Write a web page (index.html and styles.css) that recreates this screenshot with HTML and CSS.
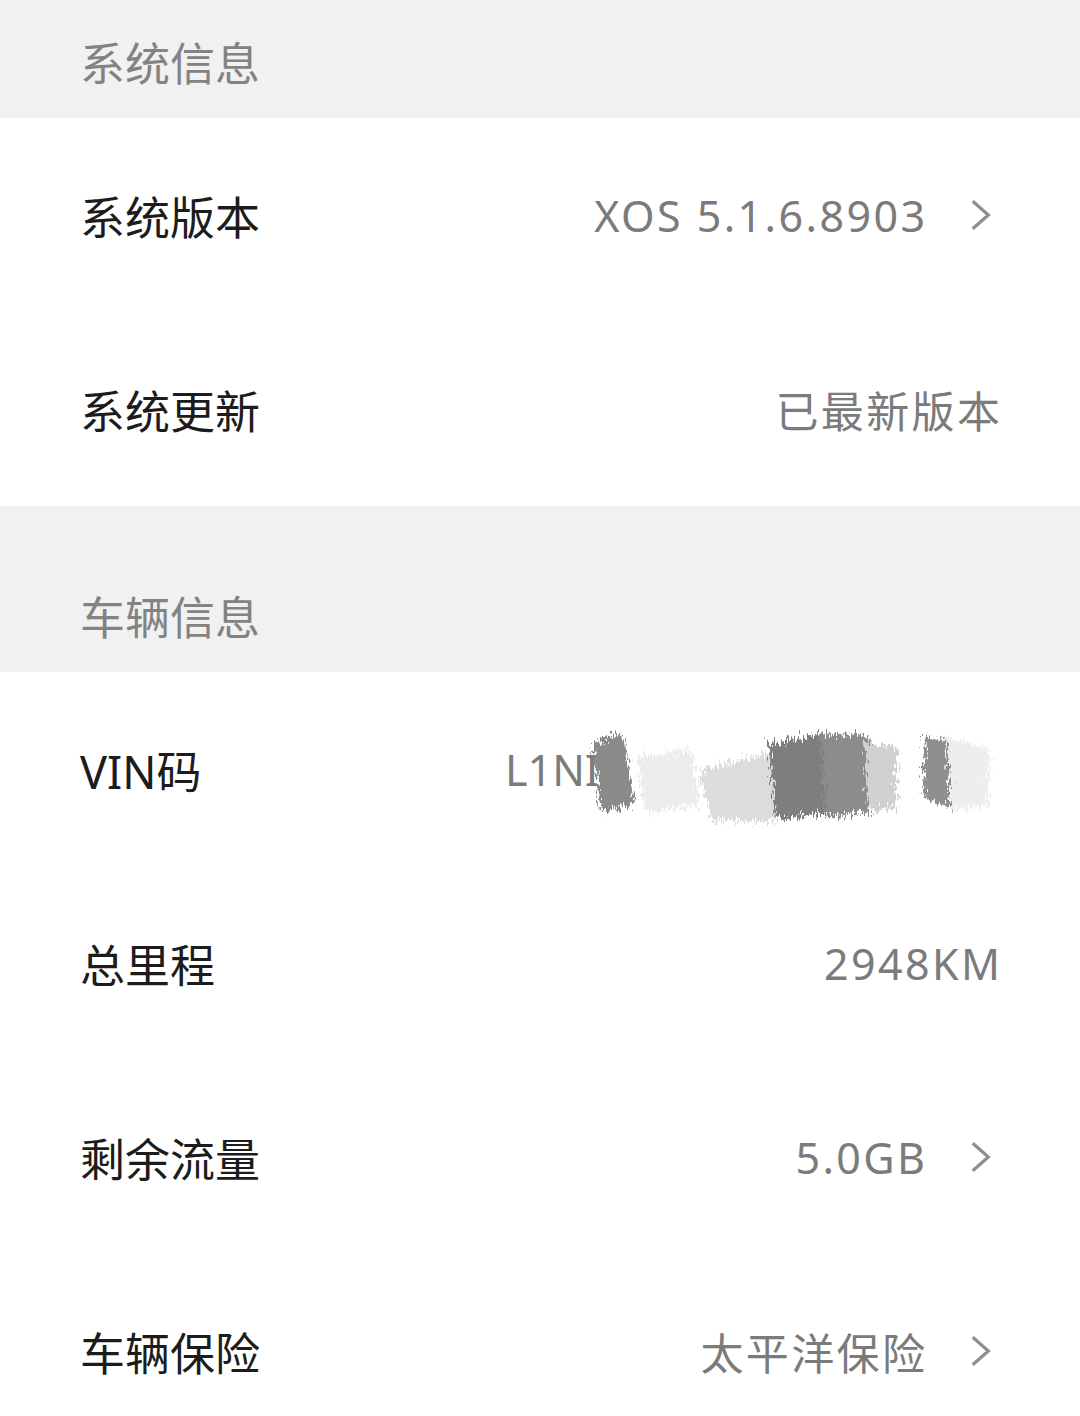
FILE: index.html
```html
<!DOCTYPE html>
<html>
<head>
    <meta charset="utf-8">
    <link rel="stylesheet" href="styles.css">
</head>
<body>
<div class="page">
    <div class="group-title first">系统信息</div>
    <div class="row">
        <span class="label">系统版本</span>
        <span class="value">XOS 5.1.6.8903</span>
        <svg class="arrow" viewBox="0 0 24 34"><path d="M3 2 L20 17 L3 32" /></svg>
    </div>
    <div class="row">
        <span class="label">系统更新</span>
        <span class="value">已最新版本</span>
    </div>

    <div class="group-title second">车辆信息</div>
    <div class="row">
        <span class="label">VIN码</span>
        <span class="value vin">L1NI
            <svg class="scribble" viewBox="0 0 420 100" preserveAspectRatio="none">
                <defs>
                    <filter id="rough" x="-10%" y="-20%" width="120%" height="140%">
                        <feTurbulence type="fractalNoise" baseFrequency="0.6 0.15" numOctaves="3" seed="7" result="n"/>
                        <feDisplacementMap in="SourceGraphic" in2="n" scale="18"/>
                    </filter>
                </defs>
                <g filter="url(#rough)">
                    <path d="M10 22 L40 12 L52 76 L18 84 Z" fill="#8a8a8a"/>
                    <path d="M55 34 L110 26 L118 78 L62 84 Z" fill="#ececec"/>
                    <path d="M118 46 L190 30 L195 92 L130 92 Z" fill="#dcdcdc"/>
                    <path d="M188 22 L245 12 L250 84 L195 90 Z" fill="#7e7e7e"/>
                    <path d="M240 12 L290 14 L292 84 L246 88 Z" fill="#8c8c8c"/>
                    <path d="M285 20 L318 24 L316 80 L288 82 Z" fill="#d0d0d0"/>
                    <path d="M346 14 L372 18 L370 80 L344 70 Z" fill="#8f8f8f"/>
                    <path d="M368 16 L412 26 L410 78 L372 82 Z" fill="#eeeeee"/>
                </g>
            </svg>
        </span>
    </div>
    <div class="row">
        <span class="label">总里程</span>
        <span class="value">2948KM</span>
    </div>
    <div class="row">
        <span class="label">剩余流量</span>
        <span class="value">5.0GB</span>
        <svg class="arrow" viewBox="0 0 24 34"><path d="M3 2 L20 17 L3 32" /></svg>
    </div>
    <div class="row">
        <span class="label">车辆保险</span>
        <span class="value">太平洋保险</span>
        <svg class="arrow" viewBox="0 0 24 34"><path d="M3 2 L20 17 L3 32" /></svg>
    </div>
</div>
</body>
</html>
```

FILE: styles.css
```css
body {
    margin: 0px;
    background: #fff;
    font-family: "Noto Sans", "Noto Sans CJK SC", sans-serif;
}

.page {
    width: 1080px;
    overflow: hidden;
}

.group-title {
    display: flex;
    align-items: flex-end;
    box-sizing: border-box;
    background: #f1f1f1;
    color: #838383;
    font-size: 45px;
    line-height: 45px;
    padding: 0 80px 32px;
}

.group-title.first {
    height: 118px;
}

.group-title.second {
    height: 166px;
}

.row {
    display: flex;
    align-items: center;
    height: 194px;
    padding: 0 80px;
}

.label {
    flex: 1;
    color: #1c1c1c;
    font-size: 45px;
}

.value {
    color: #7b7b7b;
    font-size: 43px;
    letter-spacing: 2.4px;
    margin-right: -2.4px;
}

.arrow {
    width: 22px;
    height: 32px;
    margin-left: 45px;
    margin-right: 8px;
    fill: none;
    stroke: #8e8e8e;
    stroke-width: 3.5;
}

.vin {
    position: relative;
    width: 493px;
    margin-right: 2px;
    letter-spacing: 0;
}

.scribble {
    position: absolute;
    left: 78px;
    top: -20px;
    width: 415px;
    height: 110px;
}
```
